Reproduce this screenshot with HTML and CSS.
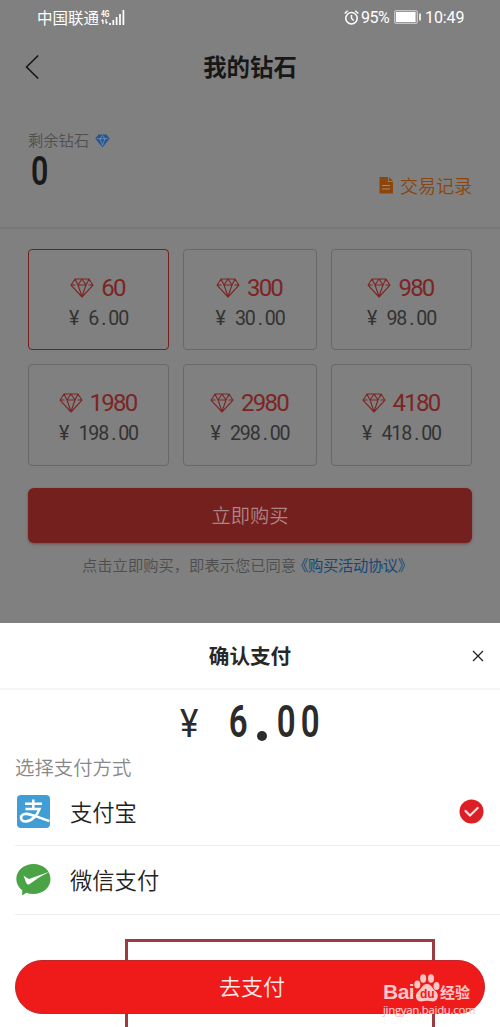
FILE: index.html
```html
<!DOCTYPE html>
<html lang="zh-CN">
<head>
<meta charset="utf-8">
<title>我的钻石</title>
<link rel="stylesheet" href="styles.css">
</head>
<body>
<svg width="0" height="0" class="defs">
  <symbol id="gem" viewBox="0 0 24 20"><path d="M5 1H19L23 7.200 12 19 1 7.200ZM1.500 7H5.500M18.500 7H22.500M8 7H16M5 1L8 7 12 1 16 7 19 1M8 7L12 18.500 16 7" fill="none" stroke="currentColor" stroke-width="1.100" stroke-linejoin="round"/></symbol>
</svg>
<main class="screen">
  <section class="page">
    <div class="status">
      <span class="carrier">中国联通</span>
      <span class="net"><b>4G</b><svg width="7" height="5" viewBox="0 0 7 5"><path d="M2 5V1M.5 2L2 .5M5 0V4M6.500 3L5 4.500" stroke="#fff" stroke-width="1.200"/></svg></span>
      <svg class="bars" width="16" height="15" viewBox="0 0 16 15"><path d="M1 15V13M4.300 15V10M7.600 15V7M11 15V4M14.400 15V0" stroke="#fff" stroke-width="1.700"/></svg>
      <svg class="alarm" width="15" height="15" viewBox="0 0 15 15" fill="none" stroke="#fff" stroke-width="1.500"><circle cx="7.500" cy="8.300" r="5.700"/><path d="M7.500 5V8.500L9.700 10.500M.7 3.500L3.700 .8M14.300 3.500L11.300 .8"/></svg>
      <span class="percent">95%</span>
      <svg class="battery" width="27" height="14" viewBox="0 0 27 14"><rect x=".5" y=".5" width="23" height="13" rx="1.500" fill="#999" stroke="#c4c4c4"/><rect x="2" y="2" width="19.500" height="10" fill="#fff"/><path d="M26 3.500V10.500" stroke="#fff" stroke-width="1.600"/></svg>
      <span class="clock">10:49</span>
    </div>
    <header class="nav">
      <svg width="14" height="24" viewBox="0 0 14 24"><path d="M12.700 1L1.500 12 12.700 23" fill="none" stroke="#181818" stroke-width="1.700" stroke-linecap="round" stroke-linejoin="round"/></svg>
      <h1>我的钻石</h1>
    </header>
    <div class="balance">
      <div class="left">
        <div class="label">剩余钻石 <svg width="15" height="14" viewBox="0 0 15 14"><path d="M3.500 .5H11.500L14.700 4.500 7.500 13.500 .3 4.500Z" fill="#27548c"/><path d="M2 4.700H13M5 4.700L7.500 1.500 10 4.700M5 4.700L7.500 11.500 10 4.700" fill="none" stroke="#7f9dbd" stroke-width=".7"/></svg></div>
        <div class="zero">0</div>
      </div>
      <div class="record"><svg width="14" height="17" viewBox="0 0 14 17"><path d="M.5 0H9V5H14V16.500H.5ZM10 0L14 4H10Z" fill="#8a460b"/><path d="M3 8.500H11M3 12H11" stroke="#a98a6c" stroke-width="1.100"/></svg>交易记录</div>
    </div>
    <div class="cards">
      <div class="card active"><div class="amount"><svg><use href="#gem"/></svg>60</div><div class="price">¥ 6<i>.</i>00</div></div>
      <div class="card"><div class="amount"><svg><use href="#gem"/></svg>300</div><div class="price">¥ 30<i>.</i>00</div></div>
      <div class="card"><div class="amount"><svg><use href="#gem"/></svg>980</div><div class="price">¥ 98<i>.</i>00</div></div>
      <div class="card"><div class="amount"><svg><use href="#gem"/></svg>1980</div><div class="price">¥ 198<i>.</i>00</div></div>
      <div class="card"><div class="amount"><svg><use href="#gem"/></svg>2980</div><div class="price">¥ 298<i>.</i>00</div></div>
      <div class="card"><div class="amount"><svg><use href="#gem"/></svg>4180</div><div class="price">¥ 418<i>.</i>00</div></div>
    </div>
    <div class="buy">立即购买</div>
    <p class="terms">点击立即购买，即表示您已同意<span>《购买活动协议》</span></p>
  </section>
  <section class="sheet">
    <header class="sheet-head">
      <h2>确认支付</h2>
      <svg width="12" height="12" viewBox="0 0 12 12"><path d="M1 1L11 11M11 1L1 11" stroke="#222" stroke-width="1.300"/></svg>
    </header>
    <div class="total"><span class="yen">¥</span><span></span><span>6</span><span class="dot"></span><span>0</span><span>0</span></div>
    <div class="choose">选择支付方式</div>
    <div class="method first">
      <svg class="logo" width="33" height="33" viewBox="0 0 33 33"><rect width="33" height="33" rx="4" fill="#419ed4"/><path d="M8 8.800H25M16.300 4.500V14M8.500 14H22.500C20.500 20 14.500 26.500 8.500 26.500C3.500 26.500 2.500 21 6.500 19.300C11.500 17.300 20 22 32.500 26" fill="none" stroke="#fff" stroke-width="2.500"/></svg>
      <span>支付宝</span>
      <svg class="check" width="25" height="25" viewBox="0 0 25 25"><circle cx="12.500" cy="12.500" r="12" fill="#db1f24"/><path d="M6.500 12L11 16.500 18.700 9" fill="none" stroke="#ffdfdf" stroke-width="2.200" stroke-linecap="round" stroke-linejoin="round"/></svg>
    </div>
    <div class="method second">
      <svg class="logo" width="35" height="32" viewBox="0 0 35 32"><path d="M17.500 0C27 0 34.500 6.500 34.500 15S27 30 17.500 30Q13.500 30 10.500 28.700L6 31.500 6.300 26.500C2.500 23.500 .3 19.500 .3 15C.3 6.500 8 0 17.500 0Z" fill="#4aa445"/><path d="M7.500 11.500Q10 13.500 13 15L34 7.500Q23 12.500 13 20.500Q11 21 10 18.500Z" fill="#fff"/></svg>
      <span>微信支付</span>
    </div>
    <div class="footer">
      <div class="frame"></div>
      <div class="pay">去支付</div>
      <div class="mark">
        <div class="brand"><b>Bai</b><svg width="26" height="28" viewBox="0 0 26 28"><g fill="#ffc6c6"><ellipse cx="3.300" cy="10.500" rx="3" ry="4"/><ellipse cx="9.200" cy="4.500" rx="3" ry="4.200"/><ellipse cx="17" cy="4.500" rx="3" ry="4.200"/><ellipse cx="22.500" cy="12" rx="3" ry="4"/><path d="M13 10C17.500 10 18 14 21.500 17C26 21 23.500 27.500 18.500 27.500Q13 26 7.500 27.500C1.500 27.500 0 21 4.500 17C8 14 8.500 10 13 10Z"/></g><text x="6" y="24" class="du">du</text></svg><em>经验</em></div>
        <div class="url">jingyan.baidu.com</div>
      </div>
    </div>
  </section>
</main>
</body>
</html>
```
FILE: styles.css
```css
* { box-sizing: border-box; }
body { margin: 0; font-family: Roboto, "Noto Sans CJK SC", sans-serif; }
.defs { display: block; position: absolute; }
h1, h2, p { margin: 0; }
svg { flex: none; display: block; }
.screen { width: 500px; height: 1027px; overflow: hidden; background: #fff; display: flex; flex-direction: column; }
.page { height: 623px; background: #808080; flex: none; }
.status { height: 34px; padding-left: 37px; display: flex; align-items: center; color: #fff; font-size: 16px; }
.carrier { font-family: "Noto Sans CJK SC", sans-serif; font-size: 15.5px; width: 64px; white-space: nowrap; margin-top: -1px; }
.net { width: 8px; display: flex; flex-direction: column; gap: 1px; font-size: 9px; line-height: 8px; }
.net b { transform: scaleX(.75); transform-origin: left; }
.alarm { margin-left: 219px; }
.percent { margin-left: 2px; width: 33px; letter-spacing: -.5px; }
.clock { margin-left: 4px; letter-spacing: -.1px; }
.nav { height: 66px; padding-left: 25px; display: flex; align-items: center; }
.nav h1 { width: 422px; text-align: center; font-size: 23.4px; line-height: 30px; font-weight: 700; color: #171717; padding-top: 1px; }
.balance { height: 129px; padding: 29px 28px 0 28px; border-bottom: 2px solid #787878; display: flex; justify-content: space-between; }
.label { display: flex; align-items: center; gap: 6px; font-size: 15.3px; line-height: 24px; color: #505050; font-weight: 350; }
.zero { width: 24px; height: 36px; font-size: 41px; line-height: 36px; font-weight: 600; color: #1a1a1a; transform: scaleX(.74); }
.record { margin-top: 44px; height: 24px; display: flex; align-items: center; gap: 7px; font-size: 18px; color: #8a460b; font-weight: 350; }
.cards { margin-top: 20px; padding: 0 28px; display: grid; grid-template-columns: 141px 134px 141px; grid-template-rows: 101px 102px; gap: 14px; }
.card { border: 1px solid #686868; border-radius: 4px; display: flex; flex-direction: column; align-items: center; padding-top: 24px; }
.card.active { border-color: #74201e; }
.amount { display: flex; align-items: center; gap: 7px; color: #7c2525; font-size: 24px; line-height: 28px; letter-spacing: -1.8px; margin-left: -2px; }
.amount svg { width: 24px; height: 20px; }
.price { font-size: 19.6px; line-height: 24px; letter-spacing: -1.1px; word-spacing: 6.5px; margin-top: 5px; color: #333; font-weight: 400; height: 24px; }
.price i { display: inline-block; width: 10px; text-align: center; font-style: normal; }
.buy { margin: 22px 28px 0; height: 55px; border-radius: 6px; background: #74201e; color: #ad8585; text-align: center; font-size: 19.3px; line-height: 57px; font-weight: 350; box-shadow: 0 1px 3px #744b4b; }
.terms { margin-left: 82px; margin-top: 12px; font-size: 15.3px; line-height: 22px; color: #4d4d4d; font-weight: 350; white-space: nowrap; }
.terms span { color: #154878; margin-left: -3px; letter-spacing: -.35px; font-weight: 400; }
.sheet { flex: 1; }
.sheet-head { height: 67px; border-bottom: 2px solid #f5f5f5; padding-left: 28px; display: flex; align-items: center; }
.sheet-head h2 { width: 444px; text-align: center; font-size: 20.6px; line-height: 28px; color: #272727; padding-top: 2px; }
.total { height: 62px; margin-left: 177px; display: flex; align-items: center; font-size: 43.5px; font-weight: 600; color: #2b2b2b; line-height: 62px; padding-top: 4px; }
.total span { width: 24.3px; display: flex; justify-content: center; transform: scaleX(.76); }
.total .yen { font-size: 38px; font-weight: 400; transform: scaleX(.92); padding-top: 2px; }
.total .dot { transform: none; padding-top: 25px; }
.dot::after { content: ""; width: 10px; height: 10px; border-radius: 50%; background: #2b2b2b; }
.choose { margin-left: 15px; margin-top: 3px; font-size: 19.4px; line-height: 28px; color: #888; font-weight: 350; }
.method { margin-left: 15px; height: 68px; border-bottom: 1px solid #ececec; display: flex; align-items: center; font-size: 22.3px; color: #222; font-weight: 350; }
.method .logo { margin-left: 2px; }
.method span { margin-left: 20px; margin-top: -2px; }
.method.first { height: 63px; padding-bottom: 5px; }
.method.second { height: 69px; }
.method.second .logo { margin-left: 1px; }
.method.second span { margin-left: 19px; }
.check { margin-left: auto; margin-right: 16px; }
.footer { position: relative; padding: 45px 15px 0; }
.frame { position: absolute; left: 125px; top: 24px; width: 310px; height: 100px; border: 3px solid #9b3b42; }
.pay { position: relative; height: 54px; border-radius: 27px; background: #ef1a1a; border: 1px solid #c12628; color: #ffe9e9; font-size: 22px; line-height: 53px; text-align: center; padding-left: 4px; font-weight: 350; }
.mark { position: absolute; left: 383px; top: 57px; color: #ffc6c6; }
.brand { display: flex; align-items: flex-end; height: 30px; }
.brand b { font: 700 21px/20px "Liberation Sans", sans-serif; width: 31px; letter-spacing: -.5px; }
.brand em { font-style: normal; font-size: 15px; line-height: 18px; height: 18px; font-weight: 700; white-space: nowrap; }
.du { font: 700 12px "Liberation Sans", sans-serif; fill: #ef1a1a; }
.url { font: 400 11.4px/16px "Open Sans", sans-serif; width: 90px; white-space: nowrap; letter-spacing: -.27px; -webkit-text-stroke: .2px #ffc6c6; }
```
